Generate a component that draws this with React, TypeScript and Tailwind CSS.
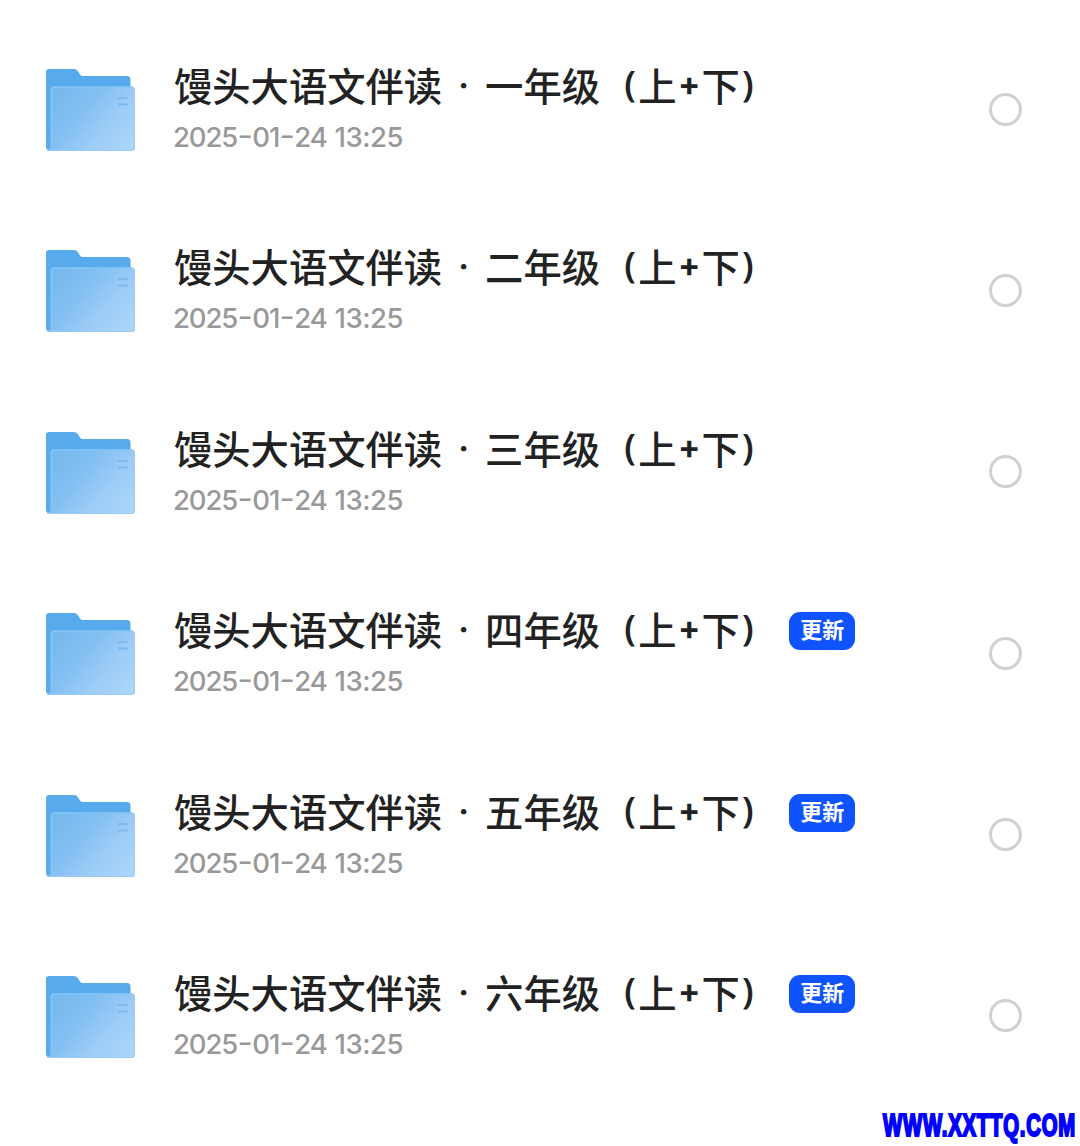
import { useState } from 'react';

interface Folder {
  grade: string;
  date: string;
  time: string;
  updated?: boolean;
}

const FOLDERS: Folder[] = [
  { grade: '一年级', date: '2025-01-24', time: '13:25' },
  { grade: '二年级', date: '2025-01-24', time: '13:25' },
  { grade: '三年级', date: '2025-01-24', time: '13:25' },
  { grade: '四年级', date: '2025-01-24', time: '13:25', updated: true },
  { grade: '五年级', date: '2025-01-24', time: '13:25', updated: true },
  { grade: '六年级', date: '2025-01-24', time: '13:25', updated: true },
];

function FolderIcon() {
  return (
    <svg className="w-[90px] h-[83px] flex-none" viewBox="0 0 90 83" fill="none">
      <defs>
        <linearGradient id="front" x1="14" y1="20" x2="84" y2="80" gradientUnits="userSpaceOnUse">
          <stop offset="0" stopColor="#75b9ef" />
          <stop offset="0.35" stopColor="#84c0f2" />
          <stop offset="0.65" stopColor="#9dccf7" />
          <stop offset="1" stopColor="#acd6fb" />
        </linearGradient>
      </defs>
      <path d="M0 3Q0 0 3 0H28Q30.500 0 31.800 2L34 5.500Q35 7 37 7H81Q84.500 7 84.500 10.500V81H3Q0 81 0 78Z" fill="#57aaec" />
      <path d="M4.500 21Q4.500 17.500 8 17.500H86Q89 17.500 89 21V79Q89 82 86 82H3Q1 82 .5 80.500Q4.500 81 4.500 77Z" fill="url(#front)" />
      <path d="M5.500 77V21Q5.500 18 8.500 18H86" stroke="#83c5f5" strokeWidth="1.500" />
      <path d="M2 81.500H86Q88.500 81.500 88.500 78.500V22" stroke="#98c9f2" strokeWidth="1" />
      <path d="M72 29H82M72 35.500H82" stroke="#7db9ec" strokeWidth="2" />
    </svg>
  );
}

function FolderRow({ folder }: { folder: Folder }) {
  const [selected, setSelected] = useState(false);

  return (
    <div className="h-[181.400px] flex items-start pl-[46px] pr-[58px]">
      <FolderIcon />

      <div className="ml-[38px] flex-1 -mt-[8px]">
        <div className="flex items-center h-[48px]">
          <h2 className="flex h-[48px] text-[38.300px] leading-[48px] font-medium text-[#222] whitespace-nowrap">
            <span>馒头大语文伴读</span>
            <span className="w-[43px] pt-[1px] text-center font-['Inter'] text-[32px] font-bold">·</span>
            <span>{folder.grade}</span>
            <span className="w-[38.300px] pr-[2.500px] text-right font-['Noto_Sans'] text-[36px] font-semibold -mt-[1px]">(</span>
            <span>上</span>
            <span className="w-[25px] text-center font-['Inter'] text-[33px] font-bold -mt-[1px]">+</span>
            <span>下</span>
            <span className="w-[38.300px] pl-[2px] font-['Noto_Sans'] text-[36px] font-semibold -mt-[1px]">)</span>
          </h2>
          {folder.updated && (
            <span className="ml-[11px] mt-[4px] w-[66px] h-[38px] rounded-[11px] bg-[#0f53ff] text-white text-[22px] leading-[33px] font-bold text-center">
              更新
            </span>
          )}
        </div>
        <p className="mt-[11px] -ml-[1px] flex font-['Inter'] font-medium text-[27.500px] leading-[34px] tracking-[-1.100px] text-[#999] whitespace-nowrap">
          {folder.date.split('-').map((part, i) => (
            <span key={i}>
              {i > 0 && <span className="inline-block w-[15px] text-center -translate-y-[2px] scale-x-[1.200]">-</span>}
              {part}
            </span>
          ))}
          <span className="ml-[8px] tracking-[-0.500px]">{folder.time}</span>
        </p>
      </div>

      <button
        type="button"
        aria-pressed={selected}
        onClick={() => setSelected(!selected)}
        className={`mt-[23.500px] w-[33px] h-[33px] flex-none rounded-full border-[3px] cursor-pointer ${selected ? 'border-[#0f53ff] bg-[#0f53ff]' : 'border-[#d0d0d0]'}`}
      />
    </div>
  );
}

export default function App() {
  return (
    <main className="relative w-[1080px] h-[1146px] overflow-hidden bg-white pt-[69px] font-['Noto_Sans_CJK_SC',sans-serif]">
      {FOLDERS.map((folder) => (
        <FolderRow key={folder.grade} folder={folder} />
      ))}

      {/* Site watermark */}
      <div className="absolute left-[883px] bottom-0 h-[40px] leading-[40px] origin-left scale-x-[0.655] font-['Liberation_Sans'] font-bold text-[31px] tracking-[1.200px] text-[#00f] [-webkit-text-stroke:2.200px_#00f] whitespace-nowrap">
        WWW.XXTTQ.COM
      </div>
    </main>
  );
}
